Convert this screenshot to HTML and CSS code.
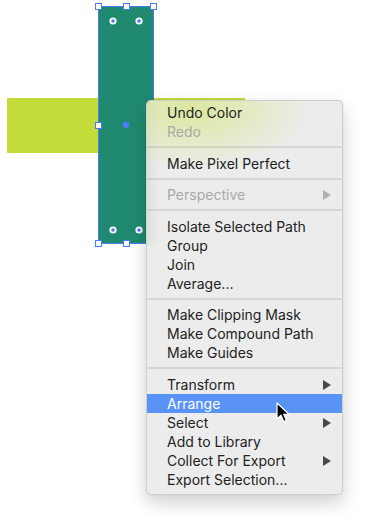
FILE: index.html
```html
<!DOCTYPE html>
<html lang="en">

<head>
  <meta charset="UTF-8">
  <meta name="viewport" content="width=device-width, initial-scale=1.0">
  <title>Context Menu</title>
  <link rel="stylesheet" href="styles.css">
</head>
<body>
  <div class="canvas">
    <!-- artwork -->
    <div class="shape lime"></div>
    <div class="shape teal"></div>

    <!-- selection box -->
    <svg class="selection" width="370" height="516" viewBox="0 0 370 516">
      <rect x="98.5" y="6.5" width="55" height="237" fill="none" stroke="#4c7cf5" stroke-width="1"/>
      <circle cx="126" cy="125" r="3.2" fill="#4c7cf5"/>
      <g fill="#fff" stroke="#4c7cf5" stroke-width="1">
        <rect x="95.5" y="3.5" width="6" height="6"/>
        <rect x="123.5" y="3.5" width="6" height="6"/>
        <rect x="150.5" y="3.5" width="6" height="6"/>
        <rect x="95.5" y="122.5" width="6" height="6"/>
        <rect x="95.5" y="240.5" width="6" height="6"/>
        <rect x="123.5" y="240.5" width="6" height="6"/>
      </g>
      <g fill="#fff">
        <circle cx="113" cy="21" r="3.6"/>
        <circle cx="139" cy="21" r="3.6"/>
        <circle cx="113" cy="230" r="3.6"/>
        <circle cx="139" cy="230" r="3.6"/>
      </g>
      <g fill="#4c7cf5">
        <circle cx="113" cy="21" r="1.8"/>
        <circle cx="139" cy="21" r="1.8"/>
        <circle cx="113" cy="230" r="1.8"/>
        <circle cx="139" cy="230" r="1.8"/>
      </g>
    </svg>

    <!-- context menu -->
    <ul class="menu">
      <li class="item">Undo Color</li>
      <li class="item disabled">Redo</li>
      <li class="sep"></li>
      <li class="item">Make Pixel Perfect</li>
      <li class="sep"></li>
      <li class="item disabled sub">Perspective</li>
      <li class="sep"></li>
      <li class="item">Isolate Selected Path</li>
      <li class="item">Group</li>
      <li class="item">Join</li>
      <li class="item">Average...</li>
      <li class="sep"></li>
      <li class="item">Make Clipping Mask</li>
      <li class="item">Make Compound Path</li>
      <li class="item">Make Guides</li>
      <li class="sep"></li>
      <li class="item sub">Transform</li>
      <li class="item active">Arrange</li>
      <li class="item sub">Select</li>
      <li class="item">Add to Library</li>
      <li class="item sub">Collect For Export</li>
      <li class="item">Export Selection...</li>
    </ul>

    <!-- mouse pointer -->
    <svg class="cursor" width="16" height="22" viewBox="0 0 16 22">
      <path d="M1 1 L1 17 L5 13.2 L7.8 19.6 L10.4 18.5 L7.7 12.3 L13 12.3 Z" fill="#000" stroke="#fff" stroke-width="1.2" stroke-linejoin="round"/>
    </svg>
  </div>
</body>

</html>
```

FILE: styles.css
```css
/* base */
body {
  margin: 0;
  padding: 0;
  background-color: #fff;
  font-family: 'Inter', 'Liberation Sans', sans-serif;
}

.canvas {
  position: relative;
  width: 370px;
  height: 516px;
  overflow: hidden;
}

/* artwork */
.shape {
  position: absolute;
}

.lime {
  left: 7px;
  top: 98px;
  width: 238px;
  height: 55px;
  background-color: #c3dc3a;
}

.teal {
  left: 98px;
  top: 6px;
  width: 55px;
  height: 237px;
  background-color: #1f8a6f;
}

.selection {
  position: absolute;
  left: 0;
  top: 0;
}

/* menu: the lime glow stands for the blurred artwork under the glass */
.menu {
  position: absolute;
  left: 146px;
  top: 100px;
  width: 197px;
  margin: 0;
  padding: 2px 0 5px;
  list-style: none;
  box-sizing: border-box;
  background-color: #ececec;
  background-image:
    radial-gradient(ellipse 120px 60px at 45px 8px, rgba(205, 228, 95, 0.55), rgba(205, 228, 95, 0) 100%),
    linear-gradient(to right, rgba(160, 200, 180, 0.25), rgba(160, 200, 180, 0) 12px);
  background-repeat: no-repeat;
  background-size: 100% 100%, 100% 145px;
  border: 1px solid rgba(0, 0, 0, 0.12);
  border-radius: 5px;
  box-shadow: 0 8px 18px rgba(0, 0, 0, 0.18), 0 0 2px rgba(0, 0, 0, 0.08);
}

.item {
  position: relative;
  height: 19px;
  line-height: 19px;
  padding-left: 20px;
  font-size: 14px;
  color: #222;
  white-space: nowrap;
}

.item.disabled {
  color: #a9a9a9;
}

.item.active {
  background-color: #5a93f6;
  color: #fff;
}

.item.sub::after {
  content: "";
  position: absolute;
  right: 11px;
  top: 5px;
  border-top: 5px solid transparent;
  border-bottom: 5px solid transparent;
  border-left: 8px solid #4a4a4a;
}

.item.disabled.sub::after {
  border-left-color: #b2b2b2;
}

.sep {
  height: 2px;
  margin: 5px 0 5.5px;
  background-color: rgba(0, 0, 0, 0.09);
}

.cursor {
  position: absolute;
  left: 276px;
  top: 402px;
}
```
